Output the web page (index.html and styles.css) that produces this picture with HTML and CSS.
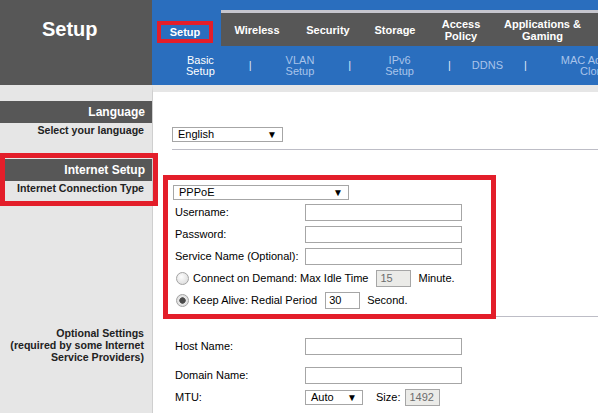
FILE: index.html
```html
<!DOCTYPE html>
<html lang="en">

<head>
    <meta charset="UTF-8">
    <meta name="viewport" content="width=device-width, initial-scale=1.0">
    <link rel="stylesheet" href="styles.css">
</head>

<body>
    <div class="page">
        <!-- Header: section title + navigation -->
        <div class="brand">Setup</div>
        <div class="nav">
            <div class="tabs">
                <div class="tab-active"><span class="tab-mark">Setup</span></div>
                <div class="tab-bar">
                    <div class="tab tab-wireless">Wireless</div>
                    <div class="tab tab-security">Security</div>
                    <div class="tab tab-storage">Storage</div>
                    <div class="tab tab-access">Access<br>Policy</div>
                    <div class="tab tab-apps">Applications &amp;<br>Gaming</div>
                </div>
            </div>
            <div class="subnav">
                <span class="sub-link current">Basic<br>Setup</span>
                <span class="sub-sep">|</span>
                <span class="sub-link">VLAN<br>Setup</span>
                <span class="sub-sep">|</span>
                <span class="sub-link">IPv6<br>Setup</span>
                <span class="sub-sep">|</span>
                <span class="sub-link short">DDNS</span>
                <span class="sub-sep">|</span>
                <span class="sub-link">MAC Address<br>Clone</span>
            </div>
        </div>

        <!-- Left column: section labels -->
        <div class="side">
            <div class="side-head">Language</div>
            <div class="side-label">Select your language</div>

            <div class="side-callout">
                <div class="side-head">Internet Setup</div>
                <div class="side-label">Internet Connection Type</div>
            </div>

            <div class="side-label side-optional">Optional Settings<br>(required by some Internet<br>Service Providers)</div>
        </div>

        <!-- Right column: form -->
        <div class="main">
            <div class="lang-block">
                <div class="select select-lang"><span>English</span><span class="arrow">&#9660;</span></div>
            </div>
            <div class="rule"></div>

            <div class="callout-box">
                <div class="select select-type"><span>PPPoE</span><span class="arrow">&#9660;</span></div>
                <div class="field">
                    <span class="field-label">Username:</span>
                    <input class="text-input" type="text">
                </div>
                <div class="field">
                    <span class="field-label">Password:</span>
                    <input class="text-input" type="password">
                </div>
                <div class="field">
                    <span class="field-label">Service Name (Optional):</span>
                    <input class="text-input" type="text">
                </div>
                <div class="field">
                    <input class="radio" type="radio" name="mode">
                    <span>Connect on Demand: Max Idle Time</span>
                    <input class="small-input" type="text" value="15" disabled>
                    <span>Minute.</span>
                </div>
                <div class="field">
                    <input class="radio" type="radio" name="mode" checked>
                    <span>Keep Alive: Redial Period</span>
                    <input class="small-input" type="text" value="30">
                    <span>Second.</span>
                </div>
            </div>
            <div class="rule rule-under"></div>

            <div class="optional">
                <div class="field field-host">
                    <span class="field-label">Host Name:</span>
                    <input class="text-input" type="text">
                </div>
                <div class="field">
                    <span class="field-label">Domain Name:</span>
                    <input class="text-input" type="text">
                </div>
                <div class="field">
                    <span class="field-label">MTU:</span>
                    <div class="select select-mtu"><span>Auto</span><span class="arrow">&#9660;</span></div>
                    <span class="size-label">Size:</span>
                    <input class="small-input" type="text" value="1492" disabled>
                </div>
            </div>
        </div>
    </div>
</body>

</html>
```

FILE: styles.css
```css
html,
body {
    margin: 0;
    height: 100%;
    overflow: hidden;
}

body {
    font-family: 'Liberation Sans', Arial, sans-serif;
    font-size: 11px;
    color: #000;
}

.page {
    display: grid;
    grid-template-columns: 152px 1fr;
    grid-template-rows: 85px 1fr;
    height: 100%;
}

/* Header */
.brand {
    background-color: #575757;
    color: #fff;
    font-size: 20px;
    font-weight: bold;
    line-height: 24px;
    padding: 17px 0 0 42px;
}

.nav {
    background-color: #2a6ebe;
    overflow: hidden;
    padding-top: 10px;
}

.tabs {
    display: flex;
    height: 36px;
}

.tab-active {
    width: 69px;
    flex: none;
}

.tab-mark {
    display: block;
    width: 56px;
    height: 22px;
    box-sizing: border-box;
    margin: 11px 0 0 5px;
    border: 4px solid #e31e2a;
    color: #fff;
    font-weight: bold;
    text-align: center;
    line-height: 14px;
}

.tab-bar {
    flex: 1;
    display: flex;
    background-color: #575757;
    border-top: 3px solid #c6c6ce;
}

.tab {
    display: flex;
    align-items: center;
    justify-content: center;
    flex: none;
    color: #fff;
    font-weight: bold;
    line-height: 12px;
    text-align: center;
}

.tab-wireless { width: 72px; }
.tab-security { width: 70px; }
.tab-storage { width: 64px; }
.tab-access { width: 68px; }
.tab-apps { width: 95px; }

.subnav {
    display: flex;
    align-items: center;
    height: 39px;
    line-height: 11px;
    color: #a9c4ea;
    white-space: nowrap;
}

.sub-link {
    padding: 0 34px;
    text-align: center;
    flex: none;
}

.sub-link.short {
    padding: 0 21px;
}

.sub-link.current {
    color: #fff;
}

.sub-sep {
    flex: none;
    color: #dfe8f6;
}

/* Left column */
.side {
    background-color: #e6e6e6;
    padding-top: 16px;
}

.side-head {
    background-color: #575757;
    color: #fff;
    font-size: 12px;
    font-weight: bold;
    text-align: right;
    line-height: 22px;
    padding-right: 7px;
}

.side-label {
    font-size: 10.6px;
    font-weight: bold;
    text-align: right;
    line-height: 14px;
    padding-right: 8px;
    color: #222;
}

.side-callout {
    position: relative;
    margin: 16px -6px 0 0;
    padding: 6px 6px 11px 0;
}

.side-callout::after {
    content: "";
    position: absolute;
    top: 0;
    right: 0;
    bottom: 0;
    left: 0;
    border: 5px solid #e31e2a;
}

.side-optional {
    margin-top: 121px;
    line-height: 12px;
}

/* Right column */
.main {
    background-color: #fff;
    border-top: 7px solid #e6e6e6;
    border-left: 1px solid #cfcfcf;
    padding-left: 19px;
}

.lang-block {
    padding-top: 35px;
}

.rule {
    height: 1px;
    background-color: #bdbdc6;
    margin-top: 7px;
}

.rule-under {
    margin-top: -3px;
}

.select {
    display: flex;
    justify-content: space-between;
    align-items: center;
    height: 15px;
    box-sizing: border-box;
    border: 1px solid #a6a6a6;
    padding: 0 5px 0 5px;
    background-color: #fff;
    line-height: 13px;
    flex: none;
}

.arrow {
    font-size: 10px;
}

.select-lang { width: 111px; }
.select-type { width: 176px; }
.select-mtu { width: 58px; }

.callout-box {
    position: relative;
    width: 333px;
    box-sizing: border-box;
    margin: 25px 0 0 -9px;
    border: 5px solid #e31e2a;
    padding: 5px 0 3px 5px;
}

.field {
    display: flex;
    align-items: center;
    height: 22px;
}

.callout-box .select + .field {
    margin-top: 1px;
}

.field-label {
    width: 130px;
    flex: none;
    padding-left: 2px;
}

.optional .field-label {
    padding-left: 3px;
}

.text-input,
.small-input {
    height: 17px;
    box-sizing: border-box;
    border: 1px solid #a6a6a6;
    margin: 0;
    padding: 0 3px;
    font-family: 'Liberation Sans', Arial, sans-serif;
    font-size: 11px;
    color: #000;
    background-color: #fff;
    flex: none;
}

.text-input {
    width: 157px;
}

.small-input {
    width: 35px;
    margin: 0 7px 0 8px;
}

.small-input:disabled {
    background-color: #ebebe8;
    color: #6d6d6d;
}

.radio {
    appearance: none;
    width: 13px;
    height: 13px;
    margin: 0 4px 0 3px;
    border: 1px solid #a3a3a3;
    border-radius: 50%;
    background: radial-gradient(circle at 40% 35%, #fdfdfd, #d6d6d6);
    flex: none;
    box-sizing: border-box;
}

.radio:checked {
    background: radial-gradient(circle, #4a4a4a 0, #4a4a4a 2.5px, #6a6a6a 3px, #e9e9e9 3.5px, #d3d3d3 100%);
}

.optional {
    padding-top: 18px;
}

.field-host {
    margin-bottom: 7px;
}

.size-label {
    margin-left: 13px;
}

.size-label + .small-input {
    margin-left: 5px;
}
```
